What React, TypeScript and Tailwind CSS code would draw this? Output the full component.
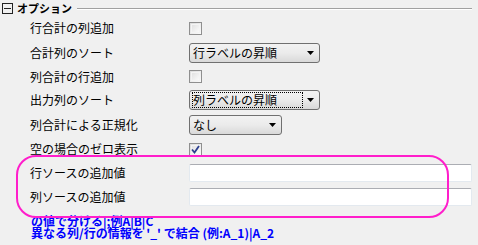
import React from 'react'

type Row =
  | { label: string; kind: 'check'; checked?: boolean; h: string }
  | { label: string; kind: 'select'; value: string; w: string; h: string; focus?: boolean }
  | { label: string; kind: 'input'; h: string }

const rows: Row[] = [
  { label: '行合計の列追加', kind: 'check', h: 'h-[24px]' },
  { label: '合計列のソート', kind: 'select', value: '行ラベルの昇順', w: 'w-[131px]', h: 'h-[25px]' },
  { label: '列合計の行追加', kind: 'check', h: 'h-[23px]' },
  { label: '出力列のソート', kind: 'select', value: '列ラベルの昇順', w: 'w-[131px]', h: 'h-[24px]', focus: true },
  { label: '列合計による正規化', kind: 'select', value: 'なし', w: 'w-[93px]', h: 'h-[25px]' },
  { label: '空の場合のゼロ表示', kind: 'check', checked: true, h: 'h-[24px]' },
  { label: '行ソースの追加値', kind: 'input', h: 'h-[24px]' },
  { label: '列ソースの追加値', kind: 'input', h: 'h-[24px]' },
]

function CheckBox({ checked }: { checked?: boolean }) {
  return (
    <div className="relative h-[13px] w-[13px] border border-[#8f8f8f] bg-gradient-to-br from-[#dcdcdc] to-[#fbfbfb]">
      <div className="absolute inset-[1px] border border-[#f4f4f4] bg-gradient-to-br from-[#e2e2e2] to-[#fafafa]" />
      {checked && (
        <svg className="absolute left-[1px] top-[1px]" width="9" height="9" viewBox="0 0 9 9">
          <path d="M1 4.5 L3.5 7.5 L8 1" fill="none" stroke="#2c3f8f" strokeWidth="1.8" />
        </svg>
      )}
    </div>
  )
}

function Select({ value, w, focus }: { value: string; w: string; focus?: boolean }) {
  return (
    <div
      className={`${w} flex h-[20px] items-center rounded-[3px] border border-[#707070] bg-gradient-to-b from-[#f2f2f2] via-[#ebebeb] to-[#d9d9d9] pl-[2px] pr-[5px]`}
    >
      <span
        className={`flex-1 leading-[14px] ${focus ? 'border border-dotted border-black' : 'border border-transparent'}`}
      >
        {value}
      </span>
      <svg className="ml-[4px]" width="7" height="4" viewBox="0 0 7 4">
        <path d="M0 0 H7 L3.5 4 Z" fill="#000" />
      </svg>
    </div>
  )
}

export default function App() {
  return (
    <div className="relative h-[245px] w-[478px] overflow-hidden bg-[#f0f0f0] text-[12px] text-black [font-family:'Noto_Sans_CJK_JP','Noto_Sans',sans-serif]">
      <div className="flex h-[16px] items-center pl-[2px] pt-[1px]">
        <div className="relative h-[11px] w-[11px] border border-[#222]">
          <div className="absolute left-[1px] right-[1px] top-[4px] h-px bg-[#222]" />
        </div>
        <span className="ml-[4px] text-[11px] font-bold leading-none">オプション</span>
        <div className="ml-[5px] mr-[6px] flex-1 border-b border-t border-b-white border-t-[#a0a0a0]" />
      </div>

      <div className="flex flex-col">
        {rows.map((r) => (
          <div key={r.label} className={`flex items-center ${r.h}`}>
            <div className="w-[189px] pl-[30px] leading-none">{r.label}</div>
            {r.kind === 'check' && <CheckBox checked={r.checked} />}
            {r.kind === 'select' && <Select value={r.value} w={r.w} focus={r.focus} />}
            {r.kind === 'input' && (
              <div className="h-[18px] w-[283px] rounded-[2px] border border-[#e3e9ef] border-t-[#abadb3] bg-white" />
            )}
          </div>
        ))}
      </div>

      <div className="mt-[6px] pl-[31px] text-[12px] font-bold leading-[12px] text-[#0000ff]">
        <div>の値で分ける|;例A|B|C</div>
        <div>異なる列/行の情報を '_' で結合 (例:A_1)|A_2</div>
      </div>

      <div className="pointer-events-none absolute left-[16px] top-[155px] h-[63px] w-[433px] rounded-[20px] border-2 border-[#ff1ecb]" />
    </div>
  )
}
